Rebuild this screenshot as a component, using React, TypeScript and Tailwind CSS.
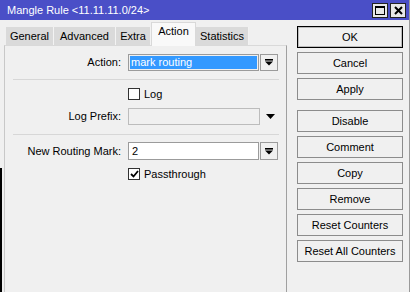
import React from "react";

function DropIcon() {
  return (
    <svg width="8" height="7" viewBox="0 0 8 7">
      <rect x="0" y="0" width="8" height="1.6" fill="#000" />
      <polygon points="0,2.6 8,2.6 4,6.6" fill="#000" />
    </svg>
  );
}

function Btn({ label, primary }: { label: string; primary?: boolean }) {
  return (
    <div
      className={
        "w-[106px] h-[22px] flex items-center justify-center bg-[#f0f0f0] text-black " +
        (primary
          ? "border border-black shadow-[inset_0_0_0_1px_#bdbdbd]"
          : "border border-[#8c8c8c]")
      }
    >
      {label}
    </div>
  );
}

function Tab({ label, w, active }: { label: string; w: number; active?: boolean }) {
  return (
    <div
      style={{ width: w }}
      className={
        active
          ? "h-[24px] bg-[#f9f9f9] border-x border-t border-[#d9d9d9] flex items-start justify-center pt-[3px] -mb-[1px] relative z-10"
          : "h-[18px] bg-[#dadada] border-r border-[#f3f3f3] flex items-center justify-center"
      }
    >
      {label}
    </div>
  );
}

function Checkbox({ checked }: { checked?: boolean }) {
  return (
    <div className="w-[12px] h-[12px] bg-white border border-[#333] flex items-center justify-center">
      {checked && (
        <svg width="9" height="8" viewBox="0 0 9 8">
          <path d="M1 4 L3.5 6.5 L8 1" stroke="#000" strokeWidth="1.8" fill="none" />
        </svg>
      )}
    </div>
  );
}

export default function App() {
  return (
    <div className="w-[413px] h-[292px] overflow-hidden bg-[#f4f4f4] flex text-[11px] font-['Liberation_Sans',Arial,sans-serif] text-black leading-none">
      <div className="w-[410px] h-[292px] flex flex-col bg-[#f0f0f0] border-r border-[#9a9a9a]">
        {/* title bar */}
        <div className="h-[20px] bg-[#4a4fc7] flex items-center pl-[7px] pr-[4px] text-white">
          <span className="flex-1 text-[11px]">Mangle Rule &lt;11.11.11.0/24&gt;</span>
          <div className="flex gap-[2px] mr-[-1px]">
            <div className="w-[16px] h-[15px] bg-[#e8e8e8] border border-[#222] flex items-center justify-center">
              <div className="w-[10px] h-[9px] border border-black border-t-2" />
            </div>
            <div className="w-[16px] h-[15px] bg-[#e8e8e8] border border-[#222] flex items-center justify-center">
              <svg width="9" height="9" viewBox="0 0 9 9">
                <path d="M1 1 L8 8 M8 1 L1 8" stroke="#000" strokeWidth="2" />
              </svg>
            </div>
          </div>
        </div>
        {/* body */}
        <div className="flex-1 flex">
          <div className="w-[4px] flex flex-col">
            <div className="h-[148px]" />
            <div className="flex-1 w-[2px] bg-black" />
          </div>
          {/* left: tabs & panel */}
          <div className="w-[283px] flex flex-col">
            <div className="h-[25px] flex items-end pl-[2px]">
              <Tab label="General" w={48} />
              <Tab label="Advanced" w={62} />
              <Tab label="Extra" w={35} />
              <Tab label="Action" w={45} active />
              <Tab label="Statistics" w={53} />
            </div>
            <div className="flex-1 border-l border-r border-t border-l-[#c8c8c8] border-r-[#a0a0a0] border-t-[#d9d9d9] flex flex-col pt-[8px]">
              {/* Action row */}
              <div className="flex items-center h-[17px]">
                <div className="w-[116px] text-right">Action:</div>
                <div className="ml-[7px] w-[131px] h-[17px] border border-[#9b9b9b] p-[1px]">
                  <div className="w-full h-full bg-[#3399ff] text-white flex items-center pl-[1px]">mark routing</div>
                </div>
                <div className="ml-[1px] w-[18px] h-[17px] border border-[#9b9b9b] bg-[#f0f0f0] flex items-center justify-center">
                  <DropIcon />
                </div>
              </div>
              <div className="mt-[8px] ml-[8px] w-[266px] h-[1px] bg-[#d7d7d7]" />
              {/* Log */}
              <div className="mt-[8px] flex items-center h-[12px]">
                <div className="w-[123px]" />
                <Checkbox />
                <span className="ml-[4px]">Log</span>
              </div>
              {/* Log prefix */}
              <div className="mt-[8px] flex items-center h-[17px]">
                <div className="w-[116px] text-right">Log Prefix:</div>
                <div className="ml-[7px] w-[132px] h-[17px] border border-[#bcbcbc] bg-[#f0f0f0]" />
                <div className="ml-[5px] w-[10px] flex justify-center">
                  <svg width="9" height="5" viewBox="0 0 9 5">
                    <polygon points="0,0 9,0 4.5,5" fill="#000" />
                  </svg>
                </div>
              </div>
              <div className="mt-[9px] ml-[8px] w-[266px] h-[1px] bg-[#d7d7d7]" />
              {/* New Routing Mark */}
              <div className="mt-[7px] flex items-center h-[18px]">
                <div className="w-[116px] text-right">New Routing Mark:</div>
                <div className="ml-[7px] w-[131px] h-[18px] border border-[#9b9b9b] bg-white flex items-center pl-[3px]">2</div>
                <div className="ml-[1px] w-[18px] h-[18px] border border-[#9b9b9b] bg-[#f0f0f0] flex items-center justify-center">
                  <DropIcon />
                </div>
              </div>
              {/* Passthrough */}
              <div className="mt-[8px] flex items-center h-[12px]">
                <div className="w-[123px]" />
                <Checkbox checked />
                <span className="ml-[4px]">Passthrough</span>
              </div>
            </div>
          </div>
          {/* right: buttons */}
          <div className="flex-1 flex flex-col pl-[10px] pt-[6px]">
            <div className="flex flex-col gap-[4px]">
              <Btn label="OK" primary />
              <Btn label="Cancel" />
              <Btn label="Apply" />
            </div>
            <div className="flex flex-col gap-[4px] mt-[10px]">
              <Btn label="Disable" />
              <Btn label="Comment" />
              <Btn label="Copy" />
              <Btn label="Remove" />
              <Btn label="Reset Counters" />
              <Btn label="Reset All Counters" />
            </div>
          </div>
        </div>
      </div>
      <div className="flex-1 bg-white" />
    </div>
  );
}
